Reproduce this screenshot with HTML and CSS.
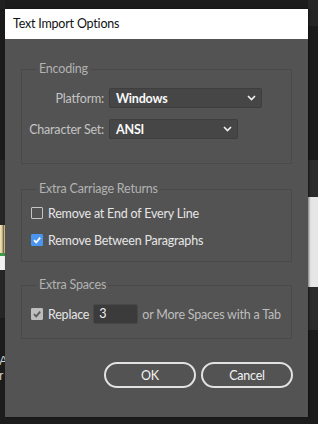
FILE: index.html
```html
<!DOCTYPE html>
<html>
<head>
<meta charset="utf-8">
<link rel="stylesheet" href="styles.css">
</head>
<body>
<div class="app">
  <div class="col-left">
    <div class="l1"></div>
    <div class="l2"></div>
    <div class="l3"></div>
    <div class="thumb"><div class="t-img"></div><div class="t-green"></div><div class="t-white"></div></div>
    <div class="l4"></div>
    <div class="l5"><span class="frag">A</span><span class="frag">r</span></div>
  </div>
  <div class="col-mid"></div>
  <div class="col-right">
    <div class="r1"></div>
    <div class="r2"></div>
    <div class="r3"></div>
    <div class="r4"></div>
    <div class="r5"></div>
    <div class="r6"></div>
  </div>
</div>

<div class="dialog">
  <div class="titlebar">Text Import Options</div>
  <div class="body">
    <fieldset class="group g1">
      <legend>Encoding</legend>
      <div class="form-grid">
        <label class="lbl">Platform:</label>
        <div class="select s-platform"><span>Windows</span><svg width="9" height="6" viewBox="0 0 9 6"><polyline points="1,1 4.5,4.5 8,1" fill="none" stroke="#f2f2f2" stroke-width="1.6"/></svg></div>
        <label class="lbl">Character Set:</label>
        <div class="select s-charset"><span>ANSI</span><svg width="9" height="6" viewBox="0 0 9 6"><polyline points="1,1 4.5,4.5 8,1" fill="none" stroke="#f2f2f2" stroke-width="1.6"/></svg></div>
      </div>
    </fieldset>

    <fieldset class="group g2">
      <legend>Extra Carriage Returns</legend>
      <div class="check-row">
        <span class="cb"></span><span class="cb-text">Remove at End of Every Line</span>
      </div>
      <div class="check-row">
        <span class="cb cb-on"><svg width="10" height="10" viewBox="0 0 10 10"><polyline points="2,5.2 4.2,7.4 8.2,2.6" fill="none" stroke="#fff" stroke-width="1.7"/></svg></span><span class="cb-text">Remove Between Paragraphs</span>
      </div>
    </fieldset>

    <fieldset class="group g3">
      <legend>Extra Spaces</legend>
      <div class="replace-row">
        <span class="cb cb-grey"><svg width="10" height="10" viewBox="0 0 10 10"><polyline points="2,5.2 4.2,7.4 8.2,2.6" fill="none" stroke="#595959" stroke-width="1.7"/></svg></span>
        <span class="cb-text">Replace</span>
        <div class="num-input">3</div>
        <span class="muted">or More Spaces with a Tab</span>
      </div>
    </fieldset>

    <div class="buttons">
      <div class="btn btn-ok">OK</div>
      <div class="btn">Cancel</div>
    </div>
  </div>
</div>
</body>
</html>
```

FILE: styles.css
```css
* { box-sizing: border-box; }
html, body { margin: 0; padding: 0; }
body {
  width: 318px;
  height: 424px;
  overflow: hidden;
  background: #1c1c1c;
  font-family: Lato, "Open Sans", sans-serif;
  position: relative;
}

.app {
  display: grid;
  grid-template-columns: 5px 1fr 10px;
  height: 424px;
}
.col-left, .col-right { display: flex; flex-direction: column; overflow: hidden; }
.l1 { height: 9px; background: #202020; }
.l2 { height: 151px; background: #1a1a1a; }
.l3 { height: 65px; background: #262626; }
.thumb { height: 45px; display: flex; flex-direction: column; }
.t-img { height: 28px; background: linear-gradient(90deg, #efe6c8 0, #d9c58f 45%, #6d5a30 65%, #e9dfbf 100%); }
.t-green { height: 3px; background: #3c9a4c; }
.t-white { flex: 1; background: #f2f2f2; }
.l4 { height: 48px; background: #262626; }
.l5 { flex: 1; background: #1c1c1c; display: flex; flex-direction: column; padding-top: 35px; }
.frag { color: #cfcfcf; font-size: 13px; line-height: 15px; margin-left: -1px; font-family: "Liberation Sans", sans-serif; }

.r1 { height: 26px; background: #262626; }
.r2 { height: 134px; background: #1c1c1c; }
.r3 { height: 37px; background: #2b2b2b; }
.r4 { height: 90px; background: #e6e6e6; }
.r5 { height: 43px; background: #2b2b2b; }
.r6 { flex: 1; background: #1c1c1c; }

.dialog {
  position: absolute;
  left: 5px;
  top: 9px;
  width: 303px;
  height: 408px;
  background: #535353;
  box-shadow: 1px 0 2px rgba(0,0,0,0.5);
  display: flex;
  flex-direction: column;
  font-size: 12.5px;
  letter-spacing: -0.2px;
}
.titlebar {
  height: 30px;
  background: #ffffff;
  color: #111;
  line-height: 30px;
  padding-left: 8px;
}
.body {
  padding: 22px 15px 0 16px;
  display: flex;
  flex-direction: column;
}

.group {
  margin: 0;
  border: 1px solid #4a4a4a;
  padding: 0 8px 0 8px;
  min-width: 0;
}
.group legend {
  margin-left: 7px;
  padding: 0 2px;
  line-height: 16px;
  height: 16px;
  color: #b2b2b2;
}
.g1 { padding-bottom: 24px; margin-right: 1px; }
.g2 { margin-top: 17px; padding-bottom: 13px; margin-right: 1px; }
.g3 { margin-top: 15px; padding-bottom: 14px; margin-right: 1px; }

.form-grid {
  display: grid;
  grid-template-columns: 74px auto;
  column-gap: 5px;
  row-gap: 11px;
  margin-top: 11px;
  align-items: center;
  justify-items: start;
}
.lbl {
  justify-self: end;
  white-space: nowrap;
  color: #c4c4c4;
}
.select {
  height: 20px;
  background: #464646;
  border: 1px solid #3e3e3e;
  border-radius: 2px;
  display: flex;
  align-items: center;
  justify-content: space-between;
  padding: 0 5px 0 6px;
  color: #fafafa;
  font-weight: 700;
}
.s-platform { width: 153px; }
.s-charset { width: 129px; }

.check-row {
  display: flex;
  align-items: center;
  height: 16px;
  margin-top: 8px;
  padding-left: 1px;
}
.check-row + .check-row { margin-top: 11px; }
.cb {
  width: 12px;
  height: 12px;
  border: 1px solid #c4c4c4;
  border-radius: 1px;
  flex: none;
  display: flex;
  align-items: center;
  justify-content: center;
}
.cb-on { background: #4a95ef; border-color: #4a95ef; }
.cb-grey { background: #bdbdbd; border-color: #bdbdbd; }
.cb-text {
  margin-left: 5px;
  color: #e6e6e6;
  white-space: nowrap;
}
.replace-row {
  display: flex;
  align-items: center;
  margin-top: 11px;
  padding-left: 1px;
}
.num-input {
  flex: none;
  width: 45px;
  height: 20px;
  margin-left: 4px;
  background: #3b3b3b;
  border: 1px solid #484848;
  border-radius: 2px;
  color: #f0f0f0;
  line-height: 18px;
  padding-left: 5px;
}
.muted {
  margin-left: 4px;
  color: #bdbdbd;
  white-space: nowrap;
}

.buttons {
  display: flex;
  justify-content: flex-end;
  gap: 5px;
  margin-top: 23px;
}
.btn {
  width: 92px;
  height: 26px;
  border: 2px solid #e2e2e2;
  border-radius: 13px;
  color: #f2f2f2;
  display: flex;
  align-items: center;
  justify-content: center;
}
```
